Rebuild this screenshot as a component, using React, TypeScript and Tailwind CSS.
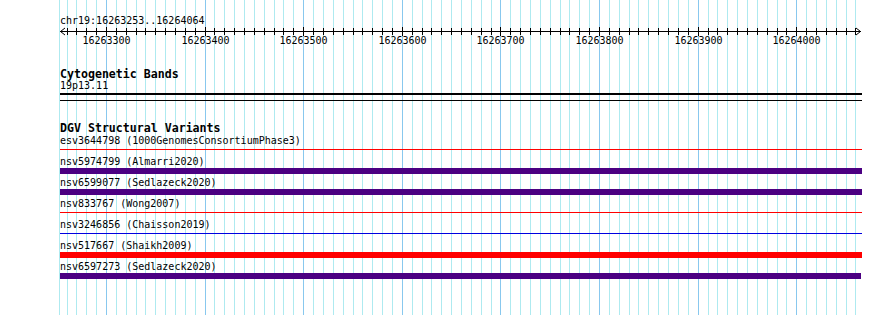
const PX_PER_BP = 0.9861;
const xOf = (bp: number) => 106 + (bp - 16263300) * PX_PER_BP;

const gridBp: number[] = [];
for (let bp = 16263260; bp <= 16264060; bp += 10) gridBp.push(bp);

const majors = gridBp.filter((bp) => bp % 100 === 0);

type Variant = { label: string; kind: 'line' | 'bar'; color: string; width: string };

const variants: Variant[] = [
  { label: 'esv3644798 (1000GenomesConsortiumPhase3)', kind: 'line', color: 'bg-[#ff0000]', width: 'w-[802px]' },
  { label: 'nsv5974799 (Almarri2020)', kind: 'bar', color: 'bg-[#4b0082]', width: 'w-[802px]' },
  { label: 'nsv6599077 (Sedlazeck2020)', kind: 'bar', color: 'bg-[#4b0082]', width: 'w-[802px]' },
  { label: 'nsv833767 (Wong2007)', kind: 'line', color: 'bg-[#ff0000]', width: 'w-[802px]' },
  { label: 'nsv3246856 (Chaisson2019)', kind: 'line', color: 'bg-[#0000e0]', width: 'w-[802px]' },
  { label: 'nsv517667 (Shaikh2009)', kind: 'bar', color: 'bg-[#ff0000]', width: 'w-[802px]' },
  { label: 'nsv6597273 (Sedlazeck2020)', kind: 'bar', color: 'bg-[#4b0082]', width: 'w-[801px]' },
];

function Gridlines() {
  return (
    <svg className="absolute inset-0 pointer-events-none" width={890} height={315} shapeRendering="crispEdges">
      <line x1={59.5} y1={0} x2={59.5} y2={315} stroke="#aeeaf0" />
      {gridBp.map((bp) => {
        const x = Math.round(xOf(bp)) + 0.5;
        return (
          <line
            key={bp}
            x1={x}
            y1={0}
            x2={x}
            y2={315}
            stroke={bp % 100 === 0 ? '#88c8ee' : '#aeeaf0'}
          />
        );
      })}
    </svg>
  );
}

function Ruler() {
  // svg coords are offset by the 60px left padding
  return (
    <div className="relative h-[20px] w-[802px]">
      <svg className="absolute left-0 top-0" width={802} height={10} shapeRendering="crispEdges">
        <line x1={0} y1={5.5} x2={801} y2={5.5} stroke="#000" />
        {gridBp.map((bp) => {
          const x = Math.round(xOf(bp)) - 60 + 0.5;
          const major = bp % 100 === 0;
          return <line key={bp} x1={x} y1={major ? 1 : 2} x2={x} y2={major ? 10 : 9} stroke="#000" />;
        })}
        <polyline points="5,2 0.5,5.5 5,9" fill="none" stroke="#000" shapeRendering="auto" />
        <polyline points="796,2 800.5,5.5 796,9" fill="none" stroke="#000" shapeRendering="auto" />
      </svg>
      {majors.map((bp) => (
        <div
          key={bp}
          className="absolute top-[10px] -translate-x-1/2 text-[10px] leading-[10px]"
          style={{ left: Math.round(xOf(bp)) - 60 + 0.5 }}
        >
          {bp}
        </div>
      ))}
    </div>
  );
}

export default function App() {
  return (
    <div className="relative w-[890px] h-[315px] bg-white overflow-hidden text-black font-['DejaVu_Sans_Mono',monospace]">
      <Gridlines />
      <div className="relative flex flex-col pl-[60px] pt-[16px]">
        <div className="text-[10px] leading-[10px]">chr19:16263253..16264064</div>
        <Ruler />

        <div className="mt-[22px] font-bold text-[11.6px] leading-[12px]">Cytogenetic Bands</div>
        <div className="mt-px text-[10px] leading-[10px]">19p13.11</div>
        <div className="mt-[2px] h-[2px] w-[802px] bg-black" />
        <div className="mt-[5px] h-px w-[802px] bg-black" />

        <div className="mt-[21px] font-bold text-[11.6px] leading-[12px]">DGV Structural Variants</div>
        <div className="mt-[2px] flex flex-col">
          {variants.map((v) => (
            <div key={v.label} className="h-[21px]">
              <div className="text-[10px] leading-[10px] whitespace-nowrap">{v.label}</div>
              <div className="mt-px h-[6px]">
                {v.kind === 'bar' ? (
                  <div className={`h-[6px] ${v.width} ${v.color}`} />
                ) : (
                  <div className={`mt-[3px] h-px ${v.width} ${v.color}`} />
                )}
              </div>
            </div>
          ))}
        </div>
      </div>
    </div>
  );
}
